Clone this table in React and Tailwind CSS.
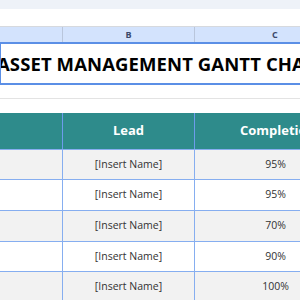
export default function App() {
  const rows = [
    { pct: '95%', h: 'h-[30px]', bg: 'bg-[#f2f2f2]' },
    { pct: '95%', h: 'h-[31px]', bg: 'bg-white' },
    { pct: '70%', h: 'h-[31px]', bg: 'bg-[#f2f2f2]' },
    { pct: '90%', h: 'h-[30px]', bg: 'bg-white' },
    { pct: '100%', h: 'h-[31px]', bg: 'bg-[#f2f2f2]' },
  ];

  return (
    <div className="w-[300px] h-[300px] overflow-hidden bg-white font-['Open_Sans',sans-serif]">
      <div className="w-[380px]">
        {/* toolbar strip */}
        <div className="h-[9px] bg-[#eef2f8]" />
        <div className="h-[18px] bg-white border-b border-[#d6d9de]" />

        {/* column letters */}
        <div className="grid grid-cols-[63px_132px_185px] h-[17px] bg-[#d3e3fd] border-b-2 border-[#5b8fe6] text-[9px] font-bold text-[#3b4a6b]">
          <div className="border-r border-[#b9c6dc]" />
          <div className="flex items-center justify-center border-r border-[#b9c6dc]">B</div>
          <div className="flex items-center justify-start pl-[77px]">C</div>
        </div>

        {/* title */}
        <div className="h-[41px] border-b-2 border-l border-[#5b8fe6] flex items-center overflow-hidden">
          <span className="whitespace-nowrap text-[18.5px] font-bold text-black tracking-[0.1px] -ml-[4px]">
            ASSET MANAGEMENT GANTT CHART
          </span>
        </div>

        <div className="h-[14px] border-b border-[#e3e3e3]" />
        <div className="h-[14px]" />

        {/* header */}
        <div className="grid grid-cols-[63px_132px_185px] h-[37px] bg-[#2e8b8b] border-b border-[#86aef0] text-white font-bold text-[13px]">
          <div className="border-r border-[#6d9cec]" />
          <div className="flex items-center justify-center border-r border-[#6d9cec]">Lead</div>
          <div className="flex items-center pl-[45px]">Completion</div>
        </div>

        {rows.map((r, i) => (
          <div
            key={i}
            className={`grid grid-cols-[63px_132px_185px] ${r.h} ${r.bg} border-b border-[#86aef0] text-[10.5px] text-[#333333]`}
          >
            <div className="border-r border-[#86aef0]" />
            <div className="flex items-center justify-center border-r border-[#86aef0]">[Insert Name]</div>
            <div className="flex items-center">
              <span className="w-[161px] text-center">{r.pct}</span>
            </div>
          </div>
        ))}
      </div>
    </div>
  );
}
